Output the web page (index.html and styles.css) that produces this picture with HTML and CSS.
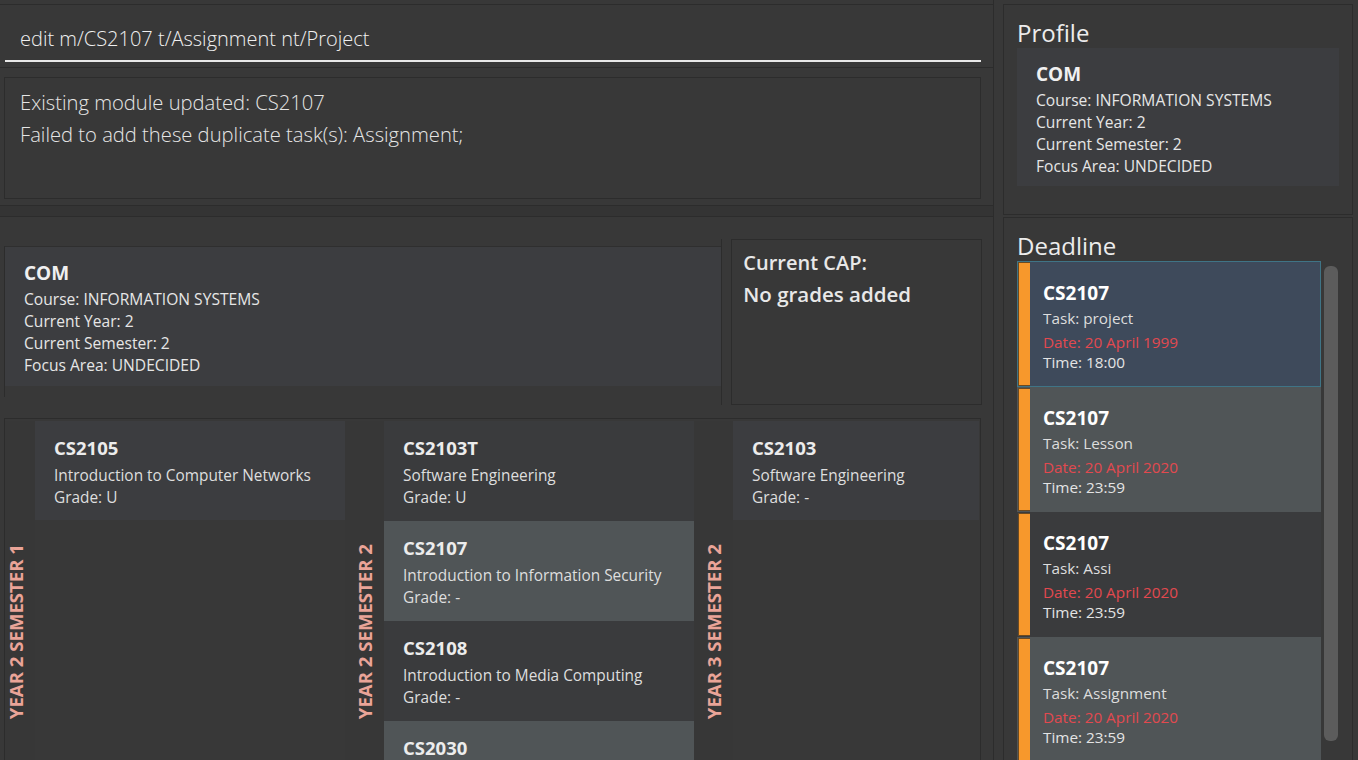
FILE: index.html
```html
<!DOCTYPE html>
<html>
<head>
<meta charset="utf-8">
<link rel="stylesheet" href="styles.css">
</head>
<body>
<div class="app">
  <div class="left">
    <div class="cmd-pane">
      <div class="cmd-input">edit m/CS2107 t/Assignment nt/Project</div>
    </div>
    <div class="result-pane">
      <div class="result-box">
        <div>Existing module updated: CS2107</div>
        <div>Failed to add these duplicate task(s): Assignment;</div>
      </div>
    </div>
    <div class="split-gap"></div>
    <div class="info-pane">
      <div class="profile-wrap">
        <div class="profile-card">
          <div class="p-title">COM</div>
          <div class="p-line">Course: INFORMATION SYSTEMS</div>
          <div class="p-line">Current Year: 2</div>
          <div class="p-line">Current Semester: 2</div>
          <div class="p-line">Focus Area: UNDECIDED</div>
        </div>
      </div>
      <div class="info-divider"></div>
      <div class="cap-box">
        <div class="cap-label">Current CAP:</div>
        <div class="cap-value">No grades added</div>
      </div>
    </div>
    <div class="modules-pane">
      <div class="modules-scroll">
        <div class="sem-col">
          <div class="sem-strip"><span class="sem-label">YEAR 2 SEMESTER 1</span></div>
          <div class="sem-list">
            <div class="mod-card single">
              <div class="m-code">CS2105</div>
              <div class="m-line">Introduction to Computer Networks</div>
              <div class="m-line">Grade: U</div>
            </div>
          </div>
        </div>
        <div class="sem-col">
          <div class="sem-strip"><span class="sem-label">YEAR 2 SEMESTER 2</span></div>
          <div class="sem-list">
            <div class="mod-card odd">
              <div class="m-code">CS2103T</div>
              <div class="m-line">Software Engineering</div>
              <div class="m-line">Grade: U</div>
            </div>
            <div class="mod-card even">
              <div class="m-code">CS2107</div>
              <div class="m-line">Introduction to Information Security</div>
              <div class="m-line">Grade: -</div>
            </div>
            <div class="mod-card odd">
              <div class="m-code">CS2108</div>
              <div class="m-line">Introduction to Media Computing</div>
              <div class="m-line">Grade: -</div>
            </div>
            <div class="mod-card even">
              <div class="m-code">CS2030</div>
            </div>
          </div>
        </div>
        <div class="sem-col last">
          <div class="sem-strip"><span class="sem-label">YEAR 3 SEMESTER 2</span></div>
          <div class="sem-list">
            <div class="mod-card single">
              <div class="m-code">CS2103</div>
              <div class="m-line">Software Engineering</div>
              <div class="m-line">Grade: -</div>
            </div>
          </div>
        </div>
      </div>
    </div>
  </div>
  <div class="right">
    <div class="r-profile">
      <div class="r-title">Profile</div>
      <div class="profile-card r-card">
        <div class="p-title">COM</div>
        <div class="p-line">Course: INFORMATION SYSTEMS</div>
        <div class="p-line">Current Year: 2</div>
        <div class="p-line">Current Semester: 2</div>
        <div class="p-line">Focus Area: UNDECIDED</div>
      </div>
    </div>
    <div class="r-deadline">
      <div class="r-title dl-title">Deadline</div>
      <div class="dl-area">
        <div class="dl-list">
          <div class="dl-card selected">
            <div class="dl-bar"></div>
            <div class="dl-body">
              <div class="dl-code">CS2107</div>
              <div class="dl-task">Task: project</div>
              <div class="dl-date">Date: 20 April 1999</div>
              <div class="dl-time">Time: 18:00</div>
            </div>
          </div>
          <div class="dl-card even">
            <div class="dl-bar"></div>
            <div class="dl-body">
              <div class="dl-code">CS2107</div>
              <div class="dl-task">Task: Lesson</div>
              <div class="dl-date">Date: 20 April 2020</div>
              <div class="dl-time">Time: 23:59</div>
            </div>
          </div>
          <div class="dl-card odd">
            <div class="dl-bar"></div>
            <div class="dl-body">
              <div class="dl-code">CS2107</div>
              <div class="dl-task">Task: Assi</div>
              <div class="dl-date">Date: 20 April 2020</div>
              <div class="dl-time">Time: 23:59</div>
            </div>
          </div>
          <div class="dl-card even">
            <div class="dl-bar"></div>
            <div class="dl-body">
              <div class="dl-code">CS2107</div>
              <div class="dl-task">Task: Assignment</div>
              <div class="dl-date">Date: 20 April 2020</div>
              <div class="dl-time">Time: 23:59</div>
            </div>
          </div>
        </div>
        <div class="dl-scroll"><div class="dl-thumb"></div></div>
      </div>
    </div>
  </div>
</div>
</body>
</html>
```

FILE: styles.css
```css
* { box-sizing: border-box; }
html, body {
  margin: 0;
  padding: 0;
  width: 1358px;
  height: 760px;
  overflow: hidden;
  background: #383838;
  font-family: "Open Sans", "Noto Sans", sans-serif;
  color: #e0e0e0;
}
.app {
  display: flex;
  width: 1358px;
  height: 760px;
}
.left {
  width: 994px;
  height: 760px;
  border-right: 1px solid #2c2c2c;
  display: flex;
  flex-direction: column;
  flex: none;
  overflow: hidden;
}
.left > div { flex: none; }
.cmd-pane {
  margin-top: 4px;
  height: 64px;
  border-top: 1px solid #2c2c2c;
  border-bottom: 1px solid #2c2c2c;
  padding: 0 12px 0 5px;
}
.cmd-input {
  height: 57px;
  border-bottom: 2px solid #e8e8e8;
  padding: 19px 0 0 15px;
  font-size: 20px;
  font-weight: 300;
  line-height: 30px;
  color: #f0f0f0;
}
.result-pane {
  height: 138px;
  border-bottom: 1px solid #2c2c2c;
  padding: 9px 12px 0 4px;
}
.result-box {
  height: 122px;
  border: 1px solid #2c2c2c;
  padding: 8px 0 0 15px;
  font-size: 20.2px;
  font-weight: 300;
  line-height: 32px;
  color: #e6e6e6;
}
.split-gap {
  height: 11px;
  background: #343434;
  border-bottom: 1px solid #2c2c2c;
}
.info-pane {
  height: 190px;
  display: flex;
  padding: 0 11px 0 4px;
}
.profile-wrap {
  margin-top: 29px;
  width: 718px;
  height: 151px;
  border-left: 1px solid #2c2c2c;
  border-top: 1px solid #2f2f2f;
}
.profile-card {
  background: #3c3d40;
  padding: 13px 19px 0 19px;
}
.profile-wrap .profile-card {
  height: 139px;
}
.p-title {
  font-size: 19px;
  font-weight: 700;
  line-height: 26px;
  color: #f0f0f0;
  margin-bottom: 2px;
}
.p-line {
  font-size: 15.6px;
  line-height: 22px;
  color: #e6e6e6;
}
.info-divider {
  width: 1px;
  margin-top: 22px;
  height: 166px;
  background: #2c2c2c;
}
.cap-box {
  margin: 22px 0 0 9px;
  width: 251px;
  height: 166px;
  border: 1px solid #2c2c2c;
  padding: 7px 0 0 11px;
  font-weight: 600;
  color: #e8e8e8;
}
.cap-label {
  font-size: 20px;
  line-height: 32px;
}
.cap-value {
  font-size: 20.5px;
  line-height: 30px;
}
.modules-pane {
  margin: 11px 12px 0 4px;
  height: 425px;
  border-top: 1px solid #2c2c2c;
  border-left: 1px solid #2c2c2c;
  border-right: 1px solid #2c2c2c;
  overflow: hidden;
  padding-top: 2px;
}
.modules-scroll {
  display: flex;
  margin-left: -9px;
  height: 100%;
}
.sem-col {
  display: flex;
  flex: none;
}
.sem-strip {
  width: 39px;
  display: flex;
  align-items: center;
  justify-content: center;
  background: #373737;
}
.sem-label {
  writing-mode: vertical-rl;
  transform: rotate(180deg);
  font-size: 18.6px;
  font-weight: 700;
  color: #eaa498;
  white-space: nowrap;
}
.sem-list {
  width: 310px;
  display: flex;
  flex-direction: column;
}
.sem-col.last .sem-list {
  width: 246px;
}
.mod-card {
  height: 100px;
  padding: 14px 0 0 19px;
  flex: none;
}
.mod-card.single { background: #3c3d40; height: 99px; }
.mod-card.odd { background: #3a3b3d; }
.mod-card.even { background: #505557; }
.m-code {
  font-size: 18.5px;
  font-weight: 700;
  line-height: 26px;
  color: #ececec;
  margin-bottom: 4px;
}
.m-line {
  font-size: 15.4px;
  line-height: 22px;
  color: #dedede;
}
.right {
  margin-left: 9px;
  width: 350px;
  flex: none;
  display: flex;
  flex-direction: column;
}
.r-profile {
  margin-top: 4px;
  height: 211px;
  border: 1px solid #2c2c2c;
  padding: 0 13px 0 13px;
  flex: none;
}
.r-title {
  font-size: 24px;
  line-height: 30px;
  padding-top: 13px;
  color: #ececec;
}
.r-card {
  height: 138px;
  padding-left: 19px;
}
.r-card .p-title { margin-bottom: 2px; }
.r-deadline {
  margin-top: 2px;
  flex: 1;
  border: 1px solid #2c2c2c;
  border-bottom: none;
  padding: 0 0 0 13px;
}
.dl-title {
  padding-top: 13px;
}
.dl-area {
  display: flex;
}
.dl-list {
  width: 304px;
  flex: none;
}
.dl-card {
  display: flex;
  height: 125px;
}
.dl-card.selected {
  background: #3e4a5b;
  border: 1px solid #3f7486;
  height: 126px;
}
.dl-card.even { background: #505557; }
.dl-card.odd { background: #3a3b3d; }
.dl-bar {
  width: 12px;
  background: #f7982c;
  margin: 1px 0 1px 1px;
  border: 1px solid #6b4a22;
  border-right: none;
  flex: none;
}
.dl-card.selected .dl-bar {
  margin: 0;
}
.dl-body {
  padding: 17px 0 0 13px;
}
.dl-code {
  font-size: 19px;
  font-weight: 700;
  line-height: 28px;
  color: #ffffff;
}
.dl-task {
  font-size: 15.3px;
  line-height: 24px;
  color: #dddddd;
  margin-top: -1px;
}
.dl-date {
  font-size: 15.3px;
  line-height: 22px;
  color: #e2494f;
  margin-top: 1px;
}
.dl-time {
  font-size: 15.3px;
  line-height: 19px;
  color: #e4e4e4;
}
.dl-scroll {
  width: 20px;
  padding: 5px 0 0 3px;
}
.dl-thumb {
  width: 14px;
  height: 475px;
  background: #5c5c5c;
  border-radius: 6px;
}
```
